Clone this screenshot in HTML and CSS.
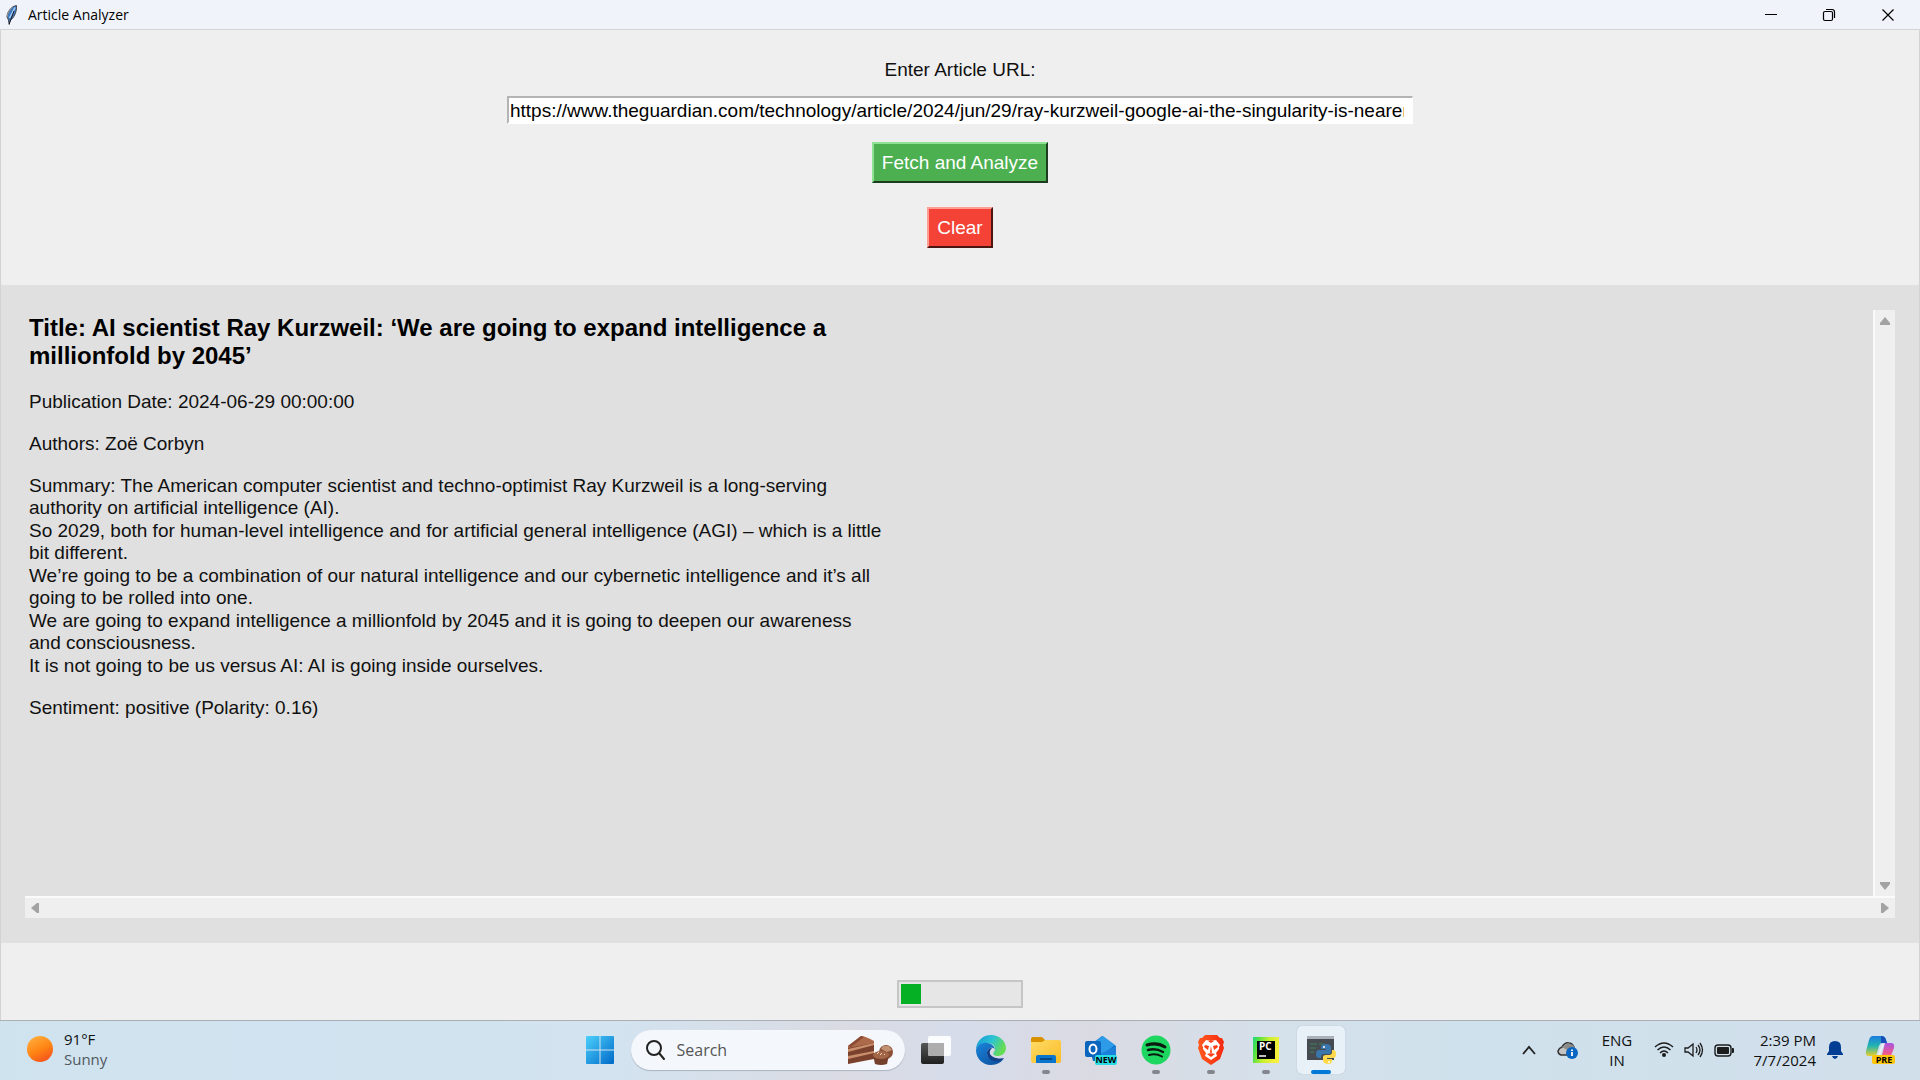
FILE: index.html
```html
<!DOCTYPE html>
<html lang="en">
<head>
<meta charset="utf-8">
<title>Article Analyzer</title>
<link rel="stylesheet" href="styles.css">
</head>
<body>
<div class="window">
  <header class="titlebar">
    <svg class="feather" width="12" height="20" viewBox="0 0 12 20"><path d="M10.500 .5C5 1.500 1 7 1 12l1.500 3 .7 4.500L4 15.500C8 13 11 7 10.500.5z" fill="#3b78c0" stroke="#46484f"/><path d="M9 2.500 3.500 13" stroke="#a9d0f4" stroke-width="1.500"/><path d="M1 12c.5-4 3-8 6-10.500" stroke="#9a9a9a" fill="none"/><path d="M8 6 3.200 19" stroke="#151a26"/></svg>
    <h1 class="titlebar-text">Article Analyzer</h1>
    <div class="caption-buttons">
      <button class="caption-button" aria-label="Minimize"><svg width="14" height="14" viewBox="0 0 14 14"><path d="M1 6.500h12" stroke="#000"/></svg></button>
      <button class="caption-button" aria-label="Restore"><svg width="14" height="14" viewBox="0 0 14 14" fill="none" stroke="#000" stroke-width="1.200"><rect x="1.500" y="3.500" width="9" height="9" rx="1.500"/><path d="M4 1.500h6a2.500 2.500 0 0 1 2.500 2.500v6"/></svg></button>
      <button class="caption-button" aria-label="Close"><svg width="14" height="14" viewBox="0 0 14 14"><path d="m1.500 1.500 11 11m0-11-11 11" stroke="#000" stroke-width="1.200"/></svg></button>
    </div>
  </header>

  <main class="client">
    <form class="controls" onsubmit="return false">
      <label class="url-label" for="url">Enter Article URL:</label>
      <input class="url-input" id="url" type="text" value="https://www.theguardian.com/technology/article/2024/jun/29/ray-kurzweil-google-ai-the-singularity-is-nearer">
      <button class="tk-button fetch" type="submit">Fetch and Analyze</button>
      <button class="tk-button clear" type="reset">Clear</button>
    </form>

    <section class="results">
      <article class="result-text">
        <h2 class="result-title">Title: AI scientist Ray Kurzweil: ‘We are going to expand intelligence a millionfold by 2045’</h2>
        <p>Publication Date: 2024-06-29 00:00:00</p>
        <p>Authors: Zoë Corbyn</p>
        <div class="summary">
          <p>Summary: The American computer scientist and techno-optimist Ray Kurzweil is a long-serving<br>authority on artificial intelligence (AI).</p>
          <p>So 2029, both for human-level intelligence and for artificial general intelligence (AGI) – which is a little<br>bit different.</p>
          <p>We’re going to be a combination of our natural intelligence and our cybernetic intelligence and it’s all<br>going to be rolled into one.</p>
          <p>We are going to expand intelligence a millionfold by 2045 and it is going to deepen our awareness<br>and consciousness.</p>
          <p>It is not going to be us versus AI: AI is going inside ourselves.</p>
        </div>
        <p>Sentiment: positive (Polarity: 0.16)</p>
      </article>
      <div class="scrollbar vertical">
        <button class="arrow" aria-label="Scroll up"><svg width="10" height="8" viewBox="0 0 10 8"><path d="M5 0 10 6v2H0V6z" fill="#a3a3a3"/></svg></button>
        <button class="arrow" aria-label="Scroll down"><svg width="10" height="8" viewBox="0 0 10 8"><path d="M5 8 10 2V0H0v2z" fill="#a3a3a3"/></svg></button>
      </div>
      <div class="scrollbar horizontal">
        <button class="arrow" aria-label="Scroll left"><svg width="8" height="10" viewBox="0 0 8 10"><path d="M0 5 6 0h2v10H6z" fill="#a3a3a3"/></svg></button>
        <button class="arrow" aria-label="Scroll right"><svg width="8" height="10" viewBox="0 0 8 10"><path d="M8 5 2 0H0v10h2z" fill="#a3a3a3"/></svg></button>
      </div>
    </section>

    <footer class="status">
      <div class="progress" role="progressbar" aria-label="Analysis progress"><div class="progress-chunk"></div></div>
    </footer>
  </main>
</div>

<nav class="taskbar">
  <button class="weather">
    <svg width="26" height="26" viewBox="0 0 26 26"><defs><linearGradient id="sun" x1="0.200" y1="0" x2="0.700" y2="1"><stop offset="0" stop-color="#ffad3d"/><stop offset=".55" stop-color="#ff8413"/><stop offset="1" stop-color="#f4511e"/></linearGradient></defs><circle cx="13" cy="13" r="13" fill="url(#sun)"/></svg>
    <span class="weather-text"><span>91°F</span><span class="muted">Sunny</span></span>
  </button>

  <div class="apps">
    <button class="app" aria-label="Start"><svg width="30" height="30" viewBox="0 0 30 30"><defs><linearGradient id="win" x1="0" y1="0" x2="1" y2="1"><stop offset="0" stop-color="#4cd0fb"/><stop offset="1" stop-color="#0069c8"/></linearGradient></defs><path d="M1 2q0-1 1-1h12.500v13.500H1zM15.500 1H28q1 0 1 1v12.500H15.500zM1 15.500h13.500V29H2q-1 0-1-1zM15.500 15.500H29V28q0 1-1 1H15.500z" fill="url(#win)"/></svg></button>
    <div class="search">
      <svg width="22" height="22" viewBox="0 0 22 22" fill="none" stroke="#222" stroke-width="2"><circle cx="10" cy="9" r="7"/><path d="m15 14 5 6" stroke-linecap="round"/></svg>
      <input class="search-input" type="text" placeholder="Search" aria-label="Search">
      <svg width="48" height="30" viewBox="0 0 48 30"><path d="M1 11 14 1q4 0 13 5v4L1 15z" fill="#ad6a4b"/><path d="m1 13 26-5v16L1 29z" fill="#7a412c"/><path d="m1 14 26-6v2L1 17zM1 21l26-5v2L1 24z" fill="#c98e6c"/><path d="m1 11 13-10 3 1L4 12z" fill="#8a4a33"/><circle cx="39" cy="17" r="7" fill="#8b5038"/><path d="m34 14 2-3 6 0 3 4-5 2z" fill="#c19172"/><path d="M26 20q8-4 16 0l-2 9q-6 2-12 0z" fill="#74402c"/><ellipse cx="34" cy="20" rx="8" ry="4" fill="#a36748"/><path d="m30 19 2-2m1 3 2-2m2 2 1-1" stroke="#f2d4b8"/></svg>
    </div>
    <button class="app" aria-label="Task view"><svg width="32" height="30" viewBox="0 0 32 30"><defs><linearGradient id="tv" x1="0" y1="0" x2="0" y2="1"><stop offset="0" stop-color="#555"/><stop offset="1" stop-color="#202020"/></linearGradient></defs><rect x="1" y="8" width="23" height="21" rx="2" fill="url(#tv)"/><rect x="8" y="1" width="23" height="20" rx="2" fill="#fff" fill-opacity=".9"/><path d="M8 8h16v13H10q-2 0-2-2z" fill="#adadad"/></svg></button>
    <button class="app" aria-label="Edge"><svg width="32" height="32" viewBox="0 0 32 32"><defs><linearGradient id="e1" x1="0" y1="0" x2="1" y2=".4"><stop offset="0" stop-color="#1596d8"/><stop offset=".55" stop-color="#2bc3d2"/><stop offset="1" stop-color="#66dc55"/></linearGradient><linearGradient id="e2" x1="0" y1="0" x2="1" y2="1"><stop offset="0" stop-color="#1a85dc"/><stop offset="1" stop-color="#0c4a97"/></linearGradient></defs><path d="M1 16C1 7 8 1 16 1s15 6 15 13c0 5-4 8-8 8s-6-2-4-4c3-5-1-9-7-9S2 12 1 16z" fill="url(#e1)"/><path d="M1 16c1-5 6-8 11-7 4 0 7 3 8 6-4-3-8 0-8 4 0 5 6 8 12 7 2 0 4-1 5-2-2 4-7 7-13 7C7 31 1 24 1 16z" fill="url(#e2)"/><path d="M12 19c0-3 2-5 5-5-7 7 4 12 12 10-3 3-7 4-10 3-4-1-7-4-7-8z" fill="#123f88"/></svg></button>
    <button class="app running" aria-label="File Explorer"><svg width="32" height="30" viewBox="0 0 32 30"><defs><linearGradient id="fo" x1="0" y1="0" x2="1" y2="1"><stop offset="0" stop-color="#ffdc68"/><stop offset="1" stop-color="#fabb24"/></linearGradient></defs><path d="M1 4q0-2 2-2h9l4 4-3 4H1z" fill="#d99100"/><path d="m12 7 3-2h14q2 0 2 2v19q0 2-2 2H3q-2 0-2-2V7z" fill="url(#fo)"/><path d="M6 28v-6q0-2 2-2h16q2 0 2 2v6z" fill="#0b75ce"/><path d="M10 24h12" stroke="#044a87" stroke-width="2"/></svg></button>
    <button class="app" aria-label="Outlook"><svg width="32" height="30" viewBox="0 0 32 30"><path d="m4 11 13-10 14 10v15H8z" fill="#0f6cc0"/><path d="m9 7 9-6 12 9-13 10z" fill="#2e9be8"/><path d="m17 18 14-7v15H9z" fill="#1a80d9"/><rect y="6" width="16" height="16" rx="2" fill="#0864bd"/><ellipse cx="8" cy="14" rx="3.500" ry="4.500" fill="none" stroke="#fff" stroke-width="2"/><rect x="10" y="20" width="22" height="10" rx="2" fill="#29dce5"/><text x="21" y="28" text-anchor="middle" class="badge-text">NEW</text></svg></button>
    <button class="app running" aria-label="Spotify"><svg width="30" height="30" viewBox="0 0 30 30"><circle cx="15" cy="15" r="14.500" fill="#1ed760"/><g fill="none" stroke="#0b1a10" stroke-linecap="round"><path d="M6 10q10-3 18 2" stroke-width="3"/><path d="M7 15q8-2 15 2" stroke-width="2.500"/><path d="M8 20q7-2 13 1.500" stroke-width="2"/></g></svg></button>
    <button class="app running" aria-label="Brave"><svg width="28" height="32" viewBox="0 0 28 32"><defs><linearGradient id="br" x1="0" y1="0" x2="1" y2="0"><stop offset="0" stop-color="#ff5a1f"/><stop offset="1" stop-color="#f52a10"/></linearGradient></defs><path d="M8 1h12l3 3h2l2 4-1 3 1 3-4 11-9 6-9-6L1 14l1-3-1-3 2-4h2z" fill="url(#br)"/><path d="m9 6 5 1 5-1 4 5-1 2v2l-3 4 1 3-6 4-6-4 1-3-3-4v-2l-1-2z" fill="#fff"/><path d="m8 11 4 1-1 4-4-3zM20 11l-4 1 1 4 4-3zM14 12l-1 6 1 2 1-2zM10 20l4-1 4 1-4 3zM11 7l3 2 3-2z" fill="#fb3d17"/></svg></button>
    <button class="app running" aria-label="PyCharm"><svg width="28" height="28" viewBox="0 0 28 28"><defs><linearGradient id="pc" x1="0" y1="0" x2="1" y2=".3"><stop offset="0" stop-color="#21d789"/><stop offset=".2" stop-color="#4be046"/><stop offset=".6" stop-color="#c8f02e"/><stop offset="1" stop-color="#f6ee3c"/></linearGradient></defs><path d="M1 1h26v26H1z" fill="url(#pc)"/><path d="M5 5h18v18H5z"/><text x="7" y="14" class="pc-text">PC</text><path d="M7 20h7" stroke="#fff" stroke-width="1.500"/></svg></button>
    <button class="app running active" aria-label="Python"><svg width="30" height="30" viewBox="0 0 30 30"><path d="M1 1h27v24H1z" fill="#454b51"/><path d="M1 1h27v3H1z" fill="#aab1b8"/><path d="M4 9h7m2 0h5M4 13h6m-6 4h4" stroke="#3f8557"/><path d="M16 10q4-2 8 0 1 1 1 3v4q0 2-2 2h-5q-3 0-3 4h-2q-3 0-3-4t3-4h7v-1h-5v-2q0-1 1-2z" fill="#3876ab"/><path d="M26 15h1q3 0 3 4t-3 4h-6v1h5v2q0 3-4 3t-5-3v-4q0-2 3-2h3q3 0 3-3z" fill="#ffd94b"/><circle cx="18" cy="12" r="1" fill="#fff"/><circle cx="23" cy="27" r="1" fill="#fff"/></svg></button>
  </div>

  <div class="tray">
    <button class="tray-button chevron" aria-label="Show hidden icons"><svg width="16" height="16" viewBox="0 0 16 16"><path d="m2 12 6-7 6 7" fill="none" stroke="#222" stroke-width="1.800"/></svg></button>
    <button class="tray-button cloud" aria-label="OneDrive"><svg width="22" height="20" viewBox="0 0 22 20"><path d="M4 15q-3-1-3-4 1-3 4-4 3-5 7-4 3 0 5 4l1 4-7 4z" fill="#c4c4c4" stroke="#333" stroke-width="1.500"/><path d="m5 7 6-4 5 2 2 3-6 3z" fill="#8b8b8b"/><circle cx="15" cy="13" r="6" fill="#0a66c2"/><path d="M15 12v4m0-6.500V11" stroke="#fff" stroke-width="1.800"/></svg></button>
    <button class="tray-button lang"><span>ENG</span><span>IN</span></button>
    <button class="tray-button system" aria-label="Network, sound and battery">
      <svg width="20" height="20" viewBox="0 0 20 20" fill="none" stroke="#1c1c1c" stroke-width="1.500"><path d="M1 7q9-8 18 0M3.500 10q6.500-6 13 0M6 13q4-4 8 0"/><circle cx="10" cy="15" r="2" fill="#1c1c1c" stroke="none"/></svg>
      <svg width="20" height="20" viewBox="0 0 20 20" fill="none" stroke="#1c1c1c" stroke-width="1.300"><path d="M1 8v4h3l5 4V4L4 8zM12 7q2 3 0 6M14 5q4 5 0 10M16 3q5 7 0 14"/></svg>
      <svg width="20" height="20" viewBox="0 0 20 20"><rect x="1" y="5" width="16" height="11" rx="3" fill="none" stroke="#1c1c1c" stroke-width="1.400"/><rect x="3" y="7" width="12" height="7" rx="1" fill="#1c1c1c"/><path d="M18 8h1q1 0 1 1v3q0 1-1 1h-1z" fill="#1c1c1c"/></svg>
    </button>
    <button class="tray-button clock"><span>2:39 PM</span><span>7/7/2024</span></button>
    <button class="tray-button bell" aria-label="Notifications"><svg width="16" height="20" viewBox="0 0 16 20"><path d="M8 1q6 0 6 6v4l2 3v1H0v-1l2-3V7q0-6 6-6zM5 16h6q-1 3-3 3t-3-3z" fill="#043e94"/></svg></button>
    <button class="tray-button copilot" aria-label="Copilot preview"><svg width="30" height="30" viewBox="0 0 30 30"><defs><linearGradient id="c1" x1="0" y1="0" x2="0" y2="1"><stop offset="0" stop-color="#1b7be0"/><stop offset=".5" stop-color="#23b5b0"/><stop offset="1" stop-color="#e8cf2e"/></linearGradient><linearGradient id="c2" x1="0" y1="0" x2="0" y2="1"><stop offset="0" stop-color="#a855e0"/><stop offset=".6" stop-color="#ec5a91"/><stop offset="1" stop-color="#ff8b52"/></linearGradient></defs><path d="M8 1h9q3 0 4 4l1 3h-5q-2 0-3 3l-2 7q-1 3-4 3H4q-4 0-3-5L4 5q1-4 4-4z" fill="url(#c1)"/><path d="M16 1q4 0 5 4l1 3h-6z" fill="#1750b8"/><path d="M20 8h6q4 0 3 5l-3 8q-1 4-4 4h-9l4-5z" fill="url(#c2)"/><path d="M17 9h2l-4 11h-2z" fill="#eaf2f8"/><rect x="7" y="20" width="23" height="9" rx="2" fill="#ffc60b"/><text x="19" y="28" text-anchor="middle" class="badge-text">PRE</text></svg></button>
  </div>
</nav>
</body>
</html>
```
FILE: styles.css
```css
* { box-sizing: border-box; }

body {
  margin: 0;
  min-height: 100vh;
  display: flex;
  flex-direction: column;
  font-family: "Liberation Sans", Arial, sans-serif;
  font-size: 19px;
  line-height: 22px;
  color: #111;
  background: #efefef;
}

h1, h2, p { margin: 0; font-size: inherit; font-weight: inherit; }
button { padding: 0; border: 0; background: none; font: inherit; color: inherit; }
svg { display: block; flex: none; }

/* Window frame */
.window { flex: 1; display: flex; flex-direction: column; }

.titlebar {
  height: 29px;
  display: flex;
  align-items: center;
  padding: 0 2px 0 6px;
  gap: 10px;
  background: #f0f3fa;
  font-family: "Open Sans", "Noto Sans", sans-serif;
  font-size: 14px;
  color: #000;
}

.titlebar-text { flex: 1; }
.caption-buttons { display: flex; }
.caption-button { width: 58px; height: 28px; display: grid; place-items: center; }
.caption-button:last-child { width: 60px; }

.client {
  flex: 1;
  display: flex;
  flex-direction: column;
  border: 1px solid #d3d3d3;
  border-bottom: 0;
}

/* URL entry and actions */
.controls { display: flex; flex-direction: column; align-items: center; padding: 29px 0 37px; }
.url-label { margin-bottom: 15px; }

.url-input {
  width: 906px;
  max-width: 100%;
  height: 28px;
  padding: 1px 8px 0 1px;
  border: 2px solid #fff;
  border-top-color: #b4b4b4;
  border-left-color: #b4b4b4;
  border-right-width: 1px;
  background: #fff;
  font: inherit;
  color: #000;
}

.tk-button { height: 41px; padding: 0 8px; border: 2px solid; color: #fff; }
.fetch { margin: 18px 0 24px; background: #4caf50; border-color: #8fe293 #1d3b1e #1d3b1e #8fe293; }
.clear { background: #f44336; border-color: #ff9d95 #4b1512 #4b1512 #ff9d95; }

/* Results pane */
.results {
  flex: 1;
  display: grid;
  grid-template-columns: 1fr 22px;
  grid-template-rows: 1fr 22px;
  padding: 25px 24px;
  background: #e0e0e0;
}

.result-text { display: flex; flex-direction: column; gap: 20px; padding: 4px; }
.result-title { max-width: 875px; margin-bottom: 1px; font-size: 24px; line-height: 28px; font-weight: 700; color: #000; }
.summary { display: flex; flex-direction: column; gap: 1px; }

.scrollbar { display: flex; justify-content: space-between; background: #efefef; }
.vertical { flex-direction: column; border-left: 2px solid #fafafa; }
.horizontal { grid-column: 1 / -1; border-top: 2px solid #fafafa; }
.arrow { width: 20px; height: 20px; display: grid; place-items: center; }
.vertical .arrow:first-child { height: 22px; }

/* Progress */
.status { display: flex; justify-content: center; padding: 37px 0 12px; }
.progress { width: 126px; height: 28px; padding: 2px; border: 2px solid #c6c6c6; background: #e6e6e6; }
.progress-chunk { width: 20px; height: 20px; background: #06b025; }

/* Taskbar */
.taskbar {
  height: 60px;
  display: grid;
  grid-template-columns: 1fr auto 1fr;
  align-items: center;
  padding-bottom: 2px;
  border-top: 1px solid #a9b0b8;
  background: linear-gradient(90deg, #cfe3ef 0%, #d3e3f0 32%, #dadbe3 44%, #d6dcea 50%, #dadae2 57%, #d5e0ea 66%, #cfe1ec 76%, #d1dfeb 100%);
  font-family: "Open Sans", "Noto Sans", sans-serif;
  font-size: 15px;
  line-height: 20px;
}

.weather { justify-self: start; display: flex; align-items: center; gap: 11px; padding: 0 0 2px 27px; }
.weather-text { display: flex; flex-direction: column; text-align: left; }
.muted { color: #50585e; }

.apps { display: flex; align-items: center; gap: 7px; }
.app { position: relative; width: 48px; height: 48px; display: grid; place-items: center; border-radius: 5px; }
.active { background: #e9f1f8; box-shadow: 0 0 1px #9aa8b4; }

.running::after {
  content: "";
  position: absolute;
  bottom: 0;
  left: 50%;
  width: 8px;
  height: 4px;
  margin-left: -4px;
  border-radius: 2px;
  background: #83878d;
}

.active::after { width: 20px; margin-left: -10px; background: #0078d7; }

.search {
  width: 274px;
  height: 40px;
  display: flex;
  align-items: center;
  gap: 11px;
  padding: 0 10px 0 13px;
  border-radius: 20px;
  background: #f4f7fb;
  box-shadow: 0 1px 1px #aab4bf;
}

.search-input { flex: 1; min-width: 0; padding: 0; border: 0; background: none; font: inherit; font-size: 16px; color: #555; }
.search-input::placeholder { color: #555; opacity: 1; }

.badge-text { font: 700 9px "Open Sans", "Noto Sans", sans-serif; }
.pc-text { font: 700 10px "Open Sans", "Noto Sans", sans-serif; fill: #fff; }

.tray { justify-self: end; display: flex; align-items: center; padding-right: 25px; }
.tray-button { display: flex; flex-direction: column; align-items: center; }
.chevron { margin-right: 20px; }
.cloud { margin-right: 20px; }
.lang { width: 36px; margin-right: 19px; }
.system { flex-direction: row; gap: 10px; margin-right: 18px; }
.clock { align-items: flex-end; width: 64px; margin-right: 11px; }
.bell { margin-right: 22px; }
```
